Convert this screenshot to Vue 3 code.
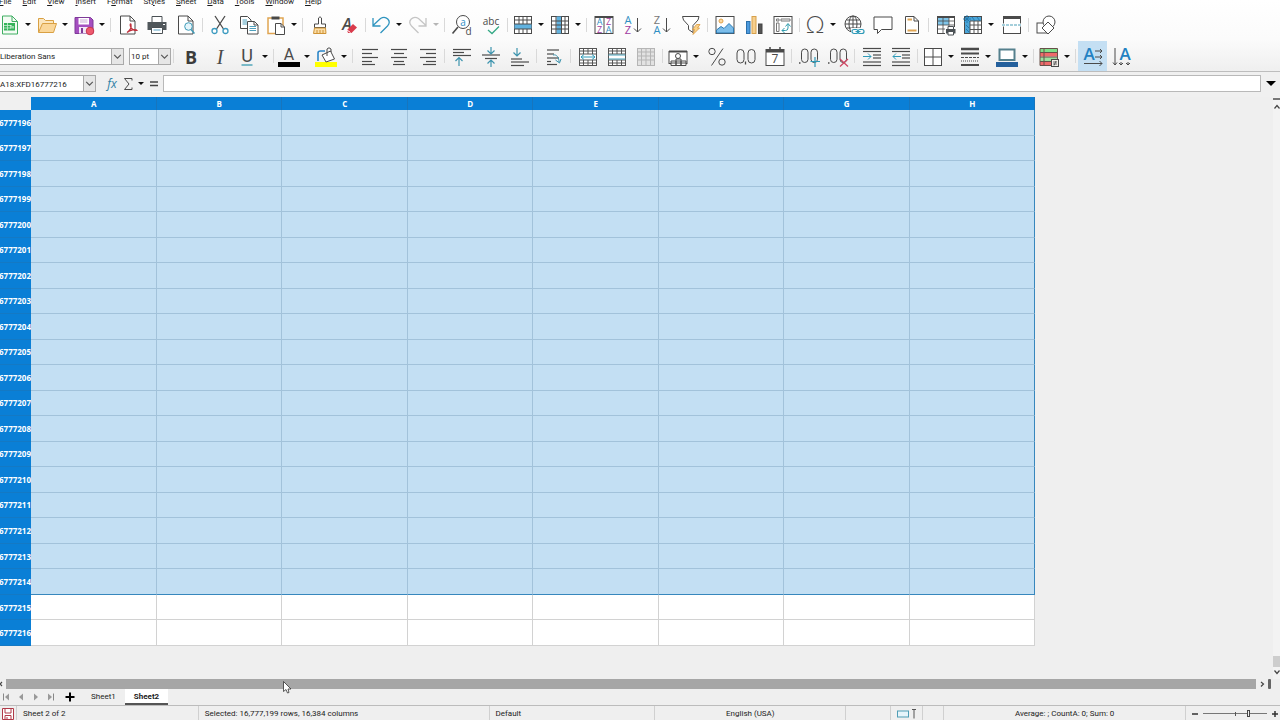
<script setup>
import { ref } from 'vue'

const menus = ['File', 'Edit', 'View', 'Insert', 'Format', 'Styles', 'Sheet', 'Data', 'Tools', 'Window', 'Help']
const columns = ['A', 'B', 'C', 'D', 'E', 'F', 'G', 'H']
const rows = Array.from({ length: 21 }, (_, i) => 16777196 + i)
const lastSelected = 16777214
const zoom = ref(72)

const D = '#4a4a4a'
const B = '#2f8fc4'
const lines = (list, color = D) =>
  list.map(([x1, x2, y]) => `<path d="M${x1} ${y}H${x2}" stroke="${color}" stroke-width="1.2"/>`).join('')
const frame = `<rect x="1.5" y="1.5" width="17" height="17" fill="#fff" stroke="${D}"/>`
const mergeGrid = (c) =>
  `<rect x="1.5" y="1.5" width="17" height="17" fill="#fff" stroke="${c}"/><path d="M5.5 1.5V7M10 1.5V7M14.5 1.5V7M5.5 13V18.5M10 13V18.5M14.5 13V18.5M1.5 4H18.5M1.5 7H18.5M1.5 13H18.5M1.5 16H18.5" stroke="${c}" fill="none"/>`
const txt = (x, y, size, fill, s, extra = '') =>
  `<text x="${x}" y="${y}" font-size="${size}" fill="${fill}" text-anchor="middle" ${extra}>${s}</text>`
const page = `<path d="M2.500 1H12L17 6V19H2.500Z" fill="#fff" stroke="${D}"/><path d="M12 1V6H17" fill="none" stroke="${D}"/>`

const art = {
  new: '<path d="M2.500 1H12L17.500 6.500V19H2.500Z" fill="#f4fbf4" stroke="#3fae62"/><path d="M12 1V6.500H17.500" fill="none" stroke="#3fae62"/><path d="M4 8H15V15.500H4Z" fill="#35b35a"/><path d="M4 10.500H11M4 13H11M7.500 8V15.500" stroke="#c8efd2" stroke-width=".8"/><path d="M11 13.500V10M13 13.500V11" stroke="#fff"/>',
  open: '<path d="M1.500 17V3.500H6.500L8.500 5.500H16.500V8" fill="#fbe6be" stroke="#d9a043"/><path d="M1.500 17.500L5.500 8.500H19.500L16.500 17.500Z" fill="#fad79a" stroke="#d9a043"/>',
  save: '<path d="M1 2.500H16.500L19 5V18.500H1Z" fill="#a54fc0" stroke="#7e3a98"/><path d="M4.500 3H15V9.500H4.500Z" fill="#fff"/><path d="M6 5H13.500M6 7H13.500" stroke="#c9a9d4"/><path d="M5 12H14V18.500H5Z" fill="#f3e8f7"/><path d="M7 13H9V18H7Z" fill="#7e3a98"/><circle cx="16" cy="16" r="3.800" fill="#ee5a6e" stroke="#c8374e"/>',
  pdf: page + '<path d="M9 17.500C12 15.500 13.500 12 13 9.500C12.500 8 11.700 9.500 12.500 11.500C13.500 14.500 16 15.500 19 15.500C18 13.500 12 15 9 17.500" fill="#fff" stroke="#c0303c" stroke-width="1.200"/>',
  print: '<path d="M5 7V1.500H15V7" fill="#fff" stroke="#4a5054"/><path d="M.5 7H19.500V15H.5Z" fill="#50575b"/><path d="M4.500 12.500H15.500V18.500H4.500Z" fill="#fff" stroke="#4a5054"/><path d="M6.500 15H13.500" stroke="#5aa5c8"/><path d="M16 9.500H18" stroke="#fff"/>',
  preview: page + '<circle cx="12.500" cy="11.500" r="3.800" fill="#e5f5fb" stroke="#3d9bb8"/><path d="M15 14.500L18.500 18.500" stroke="#3d9bb8" stroke-width="1.300"/>',
  cut: `<path d="M5 1L13.500 14M15 1L6.500 14" stroke="${D}" stroke-width="1.300"/><circle cx="4.500" cy="16" r="2.500" fill="#fff" stroke="#3d9bc0" stroke-width="1.300"/><circle cx="15.500" cy="16" r="2.500" fill="#fff" stroke="#3d9bc0" stroke-width="1.300"/>`,
  copy: `<path d="M1.500 1.500H8.500L12 5V13.500H1.500Z" fill="#fff" stroke="${D}"/><path d="M3.500 5H8M3.500 7H8M3.500 9H8" stroke="#4fa0bd"/><path d="M8.500 6.500H15.500L19 10V19H8.500Z" fill="#fff" stroke="${D}"/><path d="M15 6.500V10H19" fill="none" stroke="${D}"/><path d="M10.500 11.500H17M10.500 13.500H17M10.500 15.500H17" stroke="#4fa0bd"/>`,
  paste: `<path d="M2 3H17V18.500H2Z" fill="#fff" stroke="#e0a552" stroke-width="1.500"/><path d="M5.500 1.500H13.500V4.500H5.500Z" fill="#484848"/><path d="M9.500 8.500H15L18.500 12V19.500H9.500Z" fill="#fff" stroke="${D}"/><path d="M15 8.500V12H18.500" fill="none" stroke="${D}"/>`,
  brush: `<path d="M8.500 9V3Q10 .5 11.500 3V9H15.500V12.500H4.500V9Z" fill="#fff" stroke="${D}"/><path d="M4.500 13H15.500L16 18.500H3.500Z" fill="#fbdda6" stroke="#cf9436"/><path d="M7 15V18M10 15V18M13 15V18" stroke="#cf9436"/>`,
  clear: `${txt(8, 15, 16, D, 'A', 'font-style="italic" font-weight="600"')}<path d="M8 15L14 9L18 12.500L12.500 18H9Z" fill="#d93b4c"/><path d="M8 15L11.500 17.500" stroke="#fff"/>`,
  undo: '<path d="M2 3V11H9.500M2 10.500L9.500 3.500C15 0 21 6 16.500 11L9.500 18" fill="none" stroke="#2f94bf" stroke-width="1.300"/>',
  redo: '<path d="M18 3V11H10.500M18 10.500L10.500 3.500C5 0 -1 6 3.500 11L10.500 18" fill="none" stroke="#c5c5c5" stroke-width="1.300"/>',
  find: `<circle cx="11" cy="7" r="6.500" fill="#fff" stroke="${D}"/><path d="M6 12L.5 18.500" stroke="${D}" stroke-width="1.600"/>${txt(11, 10.500, 10, B, 'a')}${txt(16.500, 19.500, 10, D, 'd')}`,
  spell: `${txt(10, 10, 10, D, 'abc')}<path d="M7 15L11 18.500L18 11.500" fill="none" stroke="#35a986" stroke-width="1.300"/>`,
  row: frame + `<path d="M1.500 9H18.500V14H1.500Z" fill="#62b3e0"/><path d="M1.500 5H18.500M1.500 9H18.500M1.500 14H18.500M6 1.500V9M10 1.500V9M14 1.500V9M6 14V18.500M10 14V18.500M14 14V18.500" stroke="${D}"/>`,
  col: frame + `<path d="M6.500 1.500H11.500V18.500H6.500Z" fill="#62b3e0"/><path d="M1.500 6H18.500M1.500 10H18.500M1.500 14H18.500M6 1.500V18.500M11.500 1.500V18.500M15 1.500V18.500" stroke="${D}"/>`,
  sort: `<rect x="1" y="1.500" width="18" height="17" fill="#fff" stroke="${D}"/><path d="M1 2H19" stroke="${D}" stroke-width="2"/><path d="M10 2V18.500" stroke="${D}"/>${txt(5.500, 10, 9, B, 'A')}${txt(5.500, 17.500, 9, '#a03aa0', 'Z')}${txt(14.500, 10, 9, '#a03aa0', 'Z')}${txt(14.500, 17.500, 9, B, 'A')}`,
  asc: `${txt(5, 9, 11, B, 'A')}${txt(5, 18.500, 11, '#a03aa0', 'Z')}<path d="M14.500 3V17M11 13.500L14.500 17L18 13.500" fill="none" stroke="${D}"/>`,
  desc: `${txt(5, 9, 11, '#777', 'Z')}${txt(5, 18.500, 11, B, 'A')}<path d="M14.500 3V17M11 13.500L14.500 17L18 13.500" fill="none" stroke="${D}"/>`,
  filter: `<path d="M1.500 1.500H18L17 5L12 10.500V17.500L7.500 14.500V10.500L2.500 5Z" fill="#fff" stroke="${D}"/><path d="M15.500 9.500H19L16.500 13H18.500L12 19.500L13.500 14.500H11.500Z" fill="#fbd38a" stroke="#d9973a" stroke-width=".8"/>`,
  image: `<rect x="1" y="1.500" width="18" height="17" fill="#fff" stroke="${D}"/><circle cx="6" cy="6" r="2" fill="#fbd9a2" stroke="#dfa14a"/><path d="M1.500 15L6 11.500L9 13.500L14 8.500L18.500 13V18H1.500Z" fill="#7bbdea" stroke="#2d7bb5"/>`,
  chart: '<rect x="2.500" y="6.500" width="3.500" height="12" fill="#4c9ade" stroke="#2b70ab"/><rect x="8" y="1.500" width="4" height="17" fill="#f6cf8e" stroke="#d7a14c"/><rect x="14.500" y="9" width="3.500" height="9.500" fill="#555" stroke="#444"/>',
  pivot: `<rect x="1" y="1.500" width="18" height="17" fill="#fff" stroke="${D}"/><path d="M3.500 4H6V6H3.500ZM8 4H17V6H8ZM3.500 8H6V16.500H3.500Z" fill="#fff" stroke="#777"/><path d="M9 15.500H12.500Q15 15.500 15 13V9M12.500 11.500L15 8.500L17.500 11.500M11.500 13L9 15.500L11.500 18" fill="none" stroke="#2f9cad"/>`,
  omega: txt(10, 18, 24, D, 'Ω', 'class="light"'),
  link: `<circle cx="9" cy="9" r="8" fill="#fff" stroke="${D}"/><path d="M1 9H17M9 1V17M2.500 5H15.500M2.500 13H15.500" stroke="${D}"/><ellipse cx="9" cy="9" rx="4" ry="8" fill="none" stroke="${D}"/><path d="M7 13H21V20H7Z" fill="#fafafa"/><rect x="8" y="14.500" width="6" height="4" rx="2" fill="none" stroke="#2e9ab8" stroke-width="1.200"/><rect x="14" y="14.500" width="6" height="4" rx="2" fill="none" stroke="#2e9ab8" stroke-width="1.200"/><path d="M11.500 16.500H16.500" stroke="#2e9ab8"/>`,
  comment: `<path d="M1 2H19V14.500H8.500L4.500 18.500V14.500H1Z" fill="#fff" stroke="${D}"/>`,
  header: `<path d="M3.500 1.500H12L16.500 6V18.500H3.500Z" fill="#fff" stroke="${D}"/><path d="M12 1.500V6H16.500" fill="none" stroke="${D}"/><path d="M5.500 4.500H10M5.500 15.500H14.500" stroke="#e0a552" stroke-width="2"/>`,
  area: frame + `<path d="M2 2H13V10H2Z" fill="#7fc4e8"/><path d="M1.500 2H18.500" stroke="${D}" stroke-width="2"/><path d="M1.500 6H18.500M1.500 10H18.500M1.500 14H18.500M7 1.500V18.500M13 1.500V18.500" stroke="${D}" stroke-width=".8"/><path d="M9 12H20V20H9Z" fill="#fafafa"/><path d="M10 14H19.500V18.500H10Z" fill="#4a5054"/><path d="M12 14V11.500H17.500V14M12 16.500H17.500V20H12Z" fill="#fff" stroke="#4a5054"/>`,
  freeze: frame + '<path d="M2 2H18V6H7V18H2Z" fill="#4ba5d8"/><path d="M7 6H18.500M7 10H18.500M7 14.500H18.500M7 6V18.500M11 6V18.500M15 6V18.500" stroke="#555"/><path d="M0 4H8M4 0V8M1 1L7 7M7 1L1 7M9 2L12 6M14 2L17 6M3 10L6 13M3 14L6 17" stroke="#1f76ab" stroke-width=".9"/>',
  split: `<rect x="1.500" y="1.500" width="17" height="17" fill="#fff" stroke="${D}"/><path d="M1 2.500H19" stroke="${D}" stroke-width="3"/><path d="M0 10H20" stroke="#fff" stroke-width="3"/><path d="M0 10H20" stroke="#4a9fb8" stroke-dasharray="3 1"/>`,
  shapes: `<rect x="1" y="8" width="10" height="10" fill="#fff" stroke="${D}"/><circle cx="13" cy="7" r="6" fill="#fff" stroke="${D}"/><path d="M12 7L18 13L12 19L6 13Z" fill="#fff" stroke="${D}"/>`,

  bold: txt(10, 16.500, 18, '#3c3c3c', 'B', 'font-weight="700"'),
  italic: txt(10, 16.500, 20, D, 'I', 'class="serif" font-style="italic"'),
  underline: `${txt(10, 15, 18, D, 'U', 'class="ui"')}<path d="M4.500 18H15.500" stroke="#3a9bb0" stroke-width="1.300"/>`,
  fontcolor: `${txt(10, 12.500, 16, D, 'A', 'class="ui"')}<path d="M-1 15H21V20H-1Z" fill="#000"/>`,
  highlight: `<path d="M-1 15H21V20H-1Z" fill="#ffff00"/><path d="M2 14V6Q2 4 4.500 4H9" fill="none" stroke="#2c86c8" stroke-width="1.600"/><path d="M6 8L14.500 4L18.500 12L10 15Z" fill="#fff" stroke="${D}"/><path d="M11 9V2Q13 -.5 15 2V5" fill="none" stroke="${D}"/>`,
  left: lines([[2, 18, 2.500], [2, 12, 6.500], [2, 18, 10.500], [2, 12, 14.500], [2, 15, 17.500]]),
  center: lines([[2, 18, 2.500], [5, 15, 6.500], [2, 18, 10.500], [5, 15, 14.500], [4, 16, 17.500]]),
  right: lines([[2, 18, 2.500], [8, 18, 6.500], [2, 18, 10.500], [8, 18, 14.500], [5, 18, 17.500]]),
  top: lines([[1, 19, 2.500], [1, 12, 5.500], [1, 19, 8.500]]) + `<path d="M7 19V11M3.500 14L7 10.500L10.500 14" fill="none" stroke="#3d94ae" stroke-width="1.200"/>`,
  middle: lines([[1, 19, 8], [4, 16, 11.500]]) + '<path d="M10 0V7M6.500 3.500L10 7L13.500 3.500M10 20V13M6.500 16.500L10 13L13.500 16.500" fill="none" stroke="#3d94ae" stroke-width="1.200"/>',
  bottom: lines([[1, 12, 12], [1, 19, 15], [1, 14, 18.500]]) + '<path d="M7 1V9M3.500 5.500L7 9L10.500 5.500" fill="none" stroke="#3d94ae" stroke-width="1.200"/>',
  wrap: lines([[3, 15, 3], [3, 10, 7], [3, 15, 11], [3, 7, 14.500], [3, 13, 17.500]]) + '<path d="M9 8C13 7 15 11 15 15M11.500 13L15.500 16L17 12" fill="none" stroke="#3d94ae"/>',
  mergeC: mergeGrid('#555') + '<path d="M3 10H17M6 7.500L3 10L6 12.500M14 7.500L17 10L14 12.500" fill="none" stroke="#2e9ab8"/>',
  merge: mergeGrid('#555') + '<path d="M1.500 8H18.500M1.500 12H18.500" stroke="#4ba5bd"/>',
  unmerge: '<rect x="1.500" y="1.500" width="17" height="17" fill="#e2e2e2" stroke="#b5b5b5"/><path d="M5.500 1.500V18.500M10 1.500V18.500M14.500 1.500V18.500M1.500 5H18.500M1.500 9H18.500M1.500 13H18.500" stroke="#b5b5b5"/>',
  currency: `<rect x="1" y="4.500" width="18" height="12" fill="#fff" stroke="${D}"/><path d="M1 4.500H19" stroke="${D}" stroke-width="2"/><circle cx="10" cy="9" r="2.500" fill="#fff" stroke="${D}"/><path d="M3 14V18.500H8V14M8 12V18.500H13V12M13 14V18.500H18V14" fill="#fff" stroke="${D}"/><path d="M3 14H8M3 16H8M8 12H13M8 14H13M8 16H13M13 14H18M13 16H18" stroke="${D}"/>`,
  percent: `<path d="M16 1.500L4.500 18.500" stroke="${D}"/><circle cx="5" cy="4.500" r="3.200" fill="none" stroke="${D}"/><circle cx="15" cy="15" r="3.200" fill="none" stroke="${D}"/>`,
  number: `<rect x="1" y="2.500" width="7" height="13.500" rx="3.500" fill="none" stroke="${D}"/><rect x="12" y="2.500" width="7" height="13.500" rx="3.500" fill="none" stroke="${D}"/><path d="M9.500 14.500V17.500" stroke="${D}" stroke-width="1.300"/>`,
  date: `<rect x="1" y="2.500" width="18" height="16" fill="#fff" stroke="${D}"/><path d="M1 4H19" stroke="${D}" stroke-width="3"/><path d="M5 0V5M15 0V5" stroke="${D}" stroke-width="1.500"/>${txt(10, 16, 12, D, '7')}`,
  addDec: `<rect x="2.500" y="2" width="6.500" height="13.500" rx="3.200" fill="none" stroke="${D}"/><rect x="12" y="2" width="6.500" height="13.500" rx="3.200" fill="none" stroke="${D}"/><path d="M0 16H1.500" stroke="${D}" stroke-width="1.500"/><path d="M16 10V20M11.500 14.500H21" stroke="#2e9ab8" stroke-width="1.200"/>`,
  delDec: `<rect x="2.500" y="2" width="6.500" height="13.500" rx="3.200" fill="none" stroke="${D}"/><rect x="12" y="2" width="6.500" height="13.500" rx="3.200" fill="none" stroke="${D}"/><path d="M0 16H1.500" stroke="${D}" stroke-width="1.500"/><path d="M12 12L20 19.500M20 12L12 19.500" stroke="#cf4562" stroke-width="1.200"/>`,
  indent: lines([[1, 19, 1.500], [1, 19, 4.500], [11, 19, 8], [11, 19, 11], [1, 19, 15], [1, 19, 18.500]]) + '<path d="M1 9.500H9M6 6.500L9 9.500L6 12.500" fill="none" stroke="#2e9ab8"/>',
  outdent: lines([[1, 19, 1.500], [1, 19, 4.500], [11, 19, 8], [11, 19, 11], [1, 19, 15], [1, 19, 18.500]]) + '<path d="M2 9.500H10M5 6.500L2 9.500L5 12.500" fill="none" stroke="#2e9ab8"/>',
  borders: `<rect x="1.500" y="1.500" width="17" height="17" fill="#fff" stroke="${D}"/><path d="M10 1.500V18.500M1.500 10H18.500" stroke="${D}"/>`,
  style: `<path d="M1 2H19" stroke="${D}" stroke-width="2.500"/><path d="M1 6.500H19" stroke="${D}" stroke-width="2"/><path d="M1 10.500H19" stroke="${D}" stroke-width="1.200" stroke-dasharray="3 1"/><path d="M1 14H19" stroke="${D}" stroke-dasharray="1 1"/><path d="M1 18H19" stroke="${D}" stroke-width="2"/>`,
  bcolor: '<path d="M-1 15H21V20H-1Z" fill="#24609c"/><rect x="2.500" y="2.500" width="15" height="10.500" fill="#fff" stroke="#55808d" stroke-width="2"/>',
  cond: `<path d="M1 1.500H18.500V5H1Z" fill="#7fe08a"/><path d="M1 6H18.500V9.500H1ZM1 14.500H18.500V18H1Z" fill="#ee6a6a"/><path d="M1 10H18.500V14H1Z" fill="#9be2a0"/><path d="M1 1.500H18.500V18.500H1ZM1 5.500H18.500M1 10H18.500M1 14.500H18.500M5 1.500V18.500" fill="none" stroke="#685048"/><rect x="12.500" y="12.500" width="7" height="7" fill="#f2efe9" stroke="${D}"/><path d="M14 15H18M14 17H18M17 14L15 18.500" stroke="${D}" stroke-width=".8"/>`,
  ltr: `${txt(6, 13, 17, '#2381c2', 'A', 'font-weight="600"')}<path d="M12 4H19M17 2L19 4L17 6M12 10H19M17 8L19 10L17 12M1 16.500H19M16.500 14L19 16.500L16.500 19" fill="none" stroke="${D}"/>`,
  ttb: `${txt(13, 13, 17, '#2381c2', 'A', 'font-weight="600"')}<path d="M3 1V18M1 15.500L3 18L5 15.500M9 15V18M7 16L9 18L11 16M16 15V18M14 16L16 18L18 16" fill="none" stroke="${D}"/>`
}

// i: icon key, t: label, d: has a drop-down arrow
const standard = [
  [{ i: 'new', t: 'New', d: 1 }, { i: 'open', t: 'Open', d: 1 }, { i: 'save', t: 'Save', d: 1 }],
  [{ i: 'pdf', t: 'Export as PDF' }, { i: 'print', t: 'Print' }, { i: 'preview', t: 'Print Preview' }],
  [{ i: 'cut', t: 'Cut' }, { i: 'copy', t: 'Copy' }, { i: 'paste', t: 'Paste', d: 1 }],
  [{ i: 'brush', t: 'Clone Formatting' }, { i: 'clear', t: 'Clear Formatting' }],
  [{ i: 'undo', t: 'Undo', d: 1 }, { i: 'redo', t: 'Redo', d: 1, off: 1 }],
  [{ i: 'find', t: 'Find and Replace' }, { i: 'spell', t: 'Spelling' }],
  [{ i: 'row', t: 'Row', d: 1 }, { i: 'col', t: 'Column', d: 1 }],
  [{ i: 'sort', t: 'Sort' }, { i: 'asc', t: 'Sort Ascending' }, { i: 'desc', t: 'Sort Descending' }, { i: 'filter', t: 'AutoFilter' }],
  [{ i: 'image', t: 'Insert Image' }, { i: 'chart', t: 'Insert Chart' }, { i: 'pivot', t: 'Pivot Table' }],
  [{ i: 'omega', t: 'Special Character', d: 1 }, { i: 'link', t: 'Hyperlink' }, { i: 'comment', t: 'Comment' }, { i: 'header', t: 'Headers and Footers' }],
  [{ i: 'area', t: 'Print Area' }, { i: 'freeze', t: 'Freeze Rows and Columns', d: 1 }, { i: 'split', t: 'Split Window' }],
  [{ i: 'shapes', t: 'Draw Functions' }]
]
const formatting = [
  [{ i: 'bold', t: 'Bold' }, { i: 'italic', t: 'Italic' }, { i: 'underline', t: 'Underline', d: 1 }],
  [{ i: 'fontcolor', t: 'Font Color', d: 1 }, { i: 'highlight', t: 'Background Color', d: 1 }],
  [{ i: 'left', t: 'Align Left' }, { i: 'center', t: 'Align Center' }, { i: 'right', t: 'Align Right' }],
  [{ i: 'top', t: 'Align Top' }, { i: 'middle', t: 'Center Vertically' }, { i: 'bottom', t: 'Align Bottom' }],
  [{ i: 'wrap', t: 'Wrap Text' }],
  [{ i: 'mergeC', t: 'Merge and Center' }, { i: 'merge', t: 'Merge Cells' }, { i: 'unmerge', t: 'Unmerge Cells', off: 1 }],
  [{ i: 'currency', t: 'Currency', d: 1 }, { i: 'percent', t: 'Percent' }, { i: 'number', t: 'Number' }, { i: 'date', t: 'Date' }],
  [{ i: 'addDec', t: 'Add Decimal Place' }, { i: 'delDec', t: 'Delete Decimal Place' }],
  [{ i: 'indent', t: 'Increase Indent' }, { i: 'outdent', t: 'Decrease Indent' }],
  [{ i: 'borders', t: 'Borders', d: 1 }, { i: 'style', t: 'Border Style', d: 1 }, { i: 'bcolor', t: 'Border Color', d: 1 }],
  [{ i: 'cond', t: 'Conditional Formatting', d: 1 }],
  [{ i: 'ltr', t: 'Text Left to Right', on: 1 }, { i: 'ttb', t: 'Text Top to Bottom' }]
]
</script>

<template>
  <div class="app">
    <header class="chrome">
      <nav class="menubar">
        <button v-for="m in menus" :key="m" class="menu"><template v-if="m === 'Format'">F<u>o</u>rmat</template><template v-else-if="m === 'Styles'">St<u>y</u>les</template><template v-else><u>{{ m[0] }}</u>{{ m.slice(1) }}</template></button>
      </nav>
      <div class="toolbar standard">
        <div v-for="(g, n) in standard" :key="n" class="group">
          <template v-for="b in g" :key="b.i">
            <button class="tool" :class="{ split: b.d }" :aria-label="b.t">
              <svg class="icon" viewBox="0 0 20 20" v-html="art[b.i]"></svg>
            </button>
            <button v-if="b.d" class="drop" :class="{ off: b.off }" :aria-label="b.t + ' options'"></button>
          </template>
        </div>
      </div>
      <div class="toolbar format">
        <div class="combos">
          <div class="combo font">
            <select aria-label="Font Name"><option>Liberation Sans</option></select>
            <svg class="chev" viewBox="0 0 10 10"><path d="M2 3.500L5 6.500L8 3.500" /></svg>
          </div>
          <div class="combo size">
            <select aria-label="Font Size"><option>10 pt</option></select>
            <svg class="chev" viewBox="0 0 10 10"><path d="M2 3.500L5 6.500L8 3.500" /></svg>
          </div>
        </div>
        <div v-for="(g, n) in formatting" :key="n" class="group">
          <template v-for="b in g" :key="b.i">
            <button class="tool" :class="{ split: b.d, on: b.on }" :aria-label="b.t">
              <svg class="icon" viewBox="0 0 20 20" v-html="art[b.i]"></svg>
            </button>
            <button v-if="b.d" class="drop" :aria-label="b.t + ' options'"></button>
          </template>
        </div>
      </div>
    </header>

    <div class="formulabar">
      <div class="combo name">
        <input type="text" aria-label="Name Box" value="A18:XFD16777216" />
        <svg class="chev" viewBox="0 0 10 10"><path d="M2 3.500L5 6.500L8 3.500" /></svg>
      </div>
      <button class="fbtn fx" aria-label="Function Wizard"><i>fx</i></button>
      <button class="fbtn sum" aria-label="Select Function">
        <svg viewBox="0 0 10 14"><path d="M9 3.500V1.500H1.500L6 7L1.500 12.500H9V10.500" fill="none" stroke="#4a4a4a" /></svg>
      </button>
      <button class="drop" aria-label="Function list"></button>
      <button class="fbtn eq" aria-label="Formula">
        <svg viewBox="0 0 10 10"><path d="M1 3H9M1 6.500H9" stroke="#444" stroke-width="1.500" /></svg>
      </button>
      <input class="formula" type="text" aria-label="Input line" />
      <button class="expand" aria-label="Expand Formula Bar"></button>
    </div>

    <main class="work">
      <div class="sheet">
        <table>
          <colgroup><col class="hcol" /><col v-for="c in columns" :key="c" /></colgroup>
          <thead>
            <tr><td class="corner"></td><th v-for="c in columns" :key="c" scope="col">{{ c }}</th></tr>
          </thead>
          <tbody>
            <tr v-for="r in rows" :key="r" :class="{ sel: r <= lastSelected, last: r === lastSelected }">
              <th scope="row"><span>{{ r }}</span></th>
              <td v-for="c in columns" :key="c"></td>
            </tr>
          </tbody>
        </table>
      </div>
      <div class="vscroll">
        <span class="splitter"></span>
        <svg class="arr" viewBox="0 0 6 6"><path d="M1 4.500L3.500 1.500L6 4.500" /></svg>
        <span class="track"></span>
        <span class="vthumb"></span>
        <svg class="arr" viewBox="0 0 6 6"><path d="M1 1.500L3.500 4.500L6 1.500" /></svg>
      </div>
    </main>

    <div class="hscroll">
      <svg class="harr" viewBox="0 0 6 10"><path d="M2 3L0 5L2 7" /></svg>
      <span class="hthumb"></span>
      <svg class="harr wide" viewBox="0 0 12 10"><path d="M5 3L7.500 5L5 7.500" /></svg>
      <span class="hsplit"></span>
      <svg class="cursor" viewBox="0 0 9 13"><path d="M.5 .5V10.500L3 8.500L4.500 12L6 11.500L5 8H8Z" fill="#fff" stroke="#333" stroke-width=".8" /></svg>
    </div>

    <nav class="tabs">
      <button class="nav" aria-label="First sheet"><svg viewBox="0 0 10 10"><path d="M2.500 1.500V8.500" stroke="#888" /><path d="M8 1.500V8.500L4 5Z" /></svg></button>
      <button class="nav" aria-label="Previous sheet"><svg viewBox="0 0 10 10"><path d="M7 1.500V8.500L3 5Z" /></svg></button>
      <button class="nav" aria-label="Next sheet"><svg viewBox="0 0 10 10"><path d="M3 1.500V8.500L7 5Z" /></svg></button>
      <button class="nav" aria-label="Last sheet"><svg viewBox="0 0 10 10"><path d="M7.500 1.500V8.500" stroke="#888" /><path d="M2 1.500V8.500L6 5Z" /></svg></button>
      <button class="nav add" aria-label="Add sheet"><svg viewBox="0 0 10 10"><path d="M5 .5V9.500M.5 5H9.500" stroke="#000" stroke-width="2" /></svg></button>
      <button class="tab">Sheet1</button>
      <button class="tab active">Sheet2</button>
    </nav>

    <footer class="status">
      <span class="cell mid">
        <svg class="disk" viewBox="0 0 12 12"><path d="M.5 .5H11.500V11.500H.5Z" fill="#fff" stroke="#b03a48" /><path d="M3 .5V5H9V.5M3 11.500V7.500H9V11.500M5 9V11" fill="none" stroke="#b03a48" /></svg>
      </span>
      <span class="cell">Sheet 2 of 2</span>
      <span class="cell">Selected: 16,777,199 rows, 16,384 columns</span>
      <span class="cell">Default</span>
      <span class="cell mid">English (USA)</span>
      <span class="cell"></span>
      <span class="cell mid">
        <svg class="mode" viewBox="0 0 20 10"><rect x=".5" y="2" width="11" height="6" fill="#e6f4fa" stroke="#4f9db5" /><path d="M15 .5H19M17 .5V9.500" stroke="#555" /></svg>
      </span>
      <span class="cell"></span>
      <span class="cell mid">Average: ; CountA: 0; Sum: 0</span>
      <span class="cell zoom">
        <button aria-label="Zoom out"><svg viewBox="0 0 8 8"><path d="M1 4H7" stroke="#333" stroke-width="1.500" /></svg></button>
        <span class="slide"><input v-model="zoom" type="range" min="0" max="100" aria-label="Zoom" /></span>
        <button aria-label="Zoom in"><svg viewBox="0 0 8 8"><path d="M1 4H7M4 1V7" stroke="#333" stroke-width="1.500" /></svg></button>
      </span>
    </footer>
  </div>
</template>

<style>
html, body { margin: 0; overflow: hidden; background: #efefef; }
</style>

<style scoped>
.app {
  display: flex;
  flex-direction: column;
  height: 100vh;
  overflow: hidden;
  background: #efefef;
  color: #1c1c1c;
  font-family: Roboto, "Open Sans", sans-serif;
  font-size: 8px;
  line-height: 12px;
}
button, input, select { font: inherit; color: inherit; margin: 0; padding: 0; border: 0; background: none; border-radius: 0; box-sizing: border-box; outline: 0; }
svg { display: block; flex: none; }

.chrome { flex: none; background: linear-gradient(#fff, #fbfbfb 55%, #efefef); border-bottom: 1px solid #bdbdbd; }
.menubar { display: flex; align-items: flex-end; gap: 11px; height: 8px; overflow: hidden; }
.menu { flex: none; height: 12px; line-height: 12px; }
.menu:first-child { margin-left: -1px; }
.menu u { text-underline-offset: 1px; }

.toolbar { display: flex; align-items: stretch; }
.standard { height: 33px; margin-left: -3px; }
.format { height: 30px; margin-left: -2px; }
.format .icon { margin-top: 1px; }
.group { display: flex; align-items: stretch; flex: none; }
.group + .group, .combos + .group { position: relative; margin-left: 5px; }
.group + .group::before, .combos + .group::before {
  content: ""; position: absolute; left: -3px; top: 50%; width: 1px; height: 14px; margin-top: -7px; background: #d9d9d9;
}
.tool { display: flex; align-items: center; justify-content: center; width: 29px; flex: none; }
.tool.split { width: 25px; }
.tool.on { background: #c4dff3; }
.icon { width: 20px; height: 20px; overflow: visible; fill: none; }
.icon :deep(text) { font-family: "Open Sans", "Noto Sans", sans-serif; }
.icon :deep(.light) { font-family: Lato, "Open Sans", sans-serif; font-weight: 300; }
.icon :deep(.ui) { font-family: Roboto, "Open Sans", sans-serif; }
.icon :deep(.serif) { font-family: "Liberation Serif", serif; }
.drop { display: flex; align-items: center; justify-content: center; width: 12px; flex: none; }
.drop::before { content: ""; border: 3px solid transparent; border-top-color: #111; border-bottom: 0; }
.drop.off::before { border-top-color: #b5b5b5; }

.combos { display: flex; align-items: center; gap: 5px; width: 173px; flex: none; }
.combo { position: relative; flex: none; height: 17px; box-sizing: border-box; border: 1px solid #a9a9a9; background: #fff; }
.combo select, .combo input { appearance: none; display: block; width: 100%; height: 100%; padding: 1px 12px 0 1px; }
.chev { position: absolute; right: 0; top: 0; width: 11px; height: 100%; background: #e6e6e6; border-left: 1px solid #a9a9a9; pointer-events: none; }
.chev path { fill: none; stroke: #555; }
.font { width: 126px; }
.size { width: 42px; }

.formulabar { display: flex; align-items: center; height: 25px; padding-bottom: 2px; box-sizing: border-box; flex: none; background: #f0f0f0; }
.name { width: 98px; margin-left: -2px; }
.fbtn { display: flex; align-items: center; justify-content: center; flex: none; height: 18px; }
.fx { width: 16px; margin-left: 8px; color: #2d7fa5; font-size: 12px; font-family: "Open Sans", sans-serif; }
.sum { width: 16px; }
.sum svg { width: 10px; height: 14px; }
.formulabar .drop { height: 18px; width: 9px; }
.eq { width: 18px; }
.eq svg { width: 10px; height: 10px; }
.formula { flex: 1; min-width: 0; height: 17px; border: 1px solid #b9b9b9; background: #fff; padding: 0 4px; }
.expand { width: 19px; display: flex; align-items: center; justify-content: center; height: 18px; }
.expand::before { content: ""; border: 5px solid transparent; border-top-color: #000; border-bottom: 0; }

.work { display: flex; flex: 1; min-height: 0; }
.sheet { flex: 1; min-width: 0; overflow: hidden; }
table { width: 1035px; height: 549px; table-layout: fixed; border-collapse: separate; border-spacing: 0; font-family: "Open Sans", "Noto Sans", sans-serif; }
.hcol { width: 31px; }
td, th { padding: 0; box-sizing: border-box; }
thead th, thead td { height: 13px; }
thead th { background: #0a7fd6; color: #fff; border-right: 1px solid #1775bd; font-weight: 700; line-height: 12px; padding-left: 1px; }
.corner { background: #f0f0f0; }
tbody th { background: #0a7fd6; color: #fff; border-bottom: 1px solid #1479c4; font-weight: 700; line-height: 10px; padding-top: 1px; overflow: hidden; }
tbody th span { display: flex; justify-content: flex-end; }
tbody td { background: #fff; border-right: 1px solid #d2d2d2; border-bottom: 1px solid #d2d2d2; }
.sel td { background: #c3dff3; border-color: #a2c2da; }
.sel td:last-child { border-right: 1px solid #3787bd; }
.last td { border-bottom: 1px solid #3787bd; }

.vscroll { display: flex; flex-direction: column; width: 7px; flex: none; background: #f3f3f3; }
.splitter { height: 2px; margin: 1px 0 4px; background: #777; }
.arr { width: 7px; height: 6px; }
.arr path, .harr path { fill: none; stroke: #444; stroke-width: 1.2; }
.track { flex: 1; }
.vthumb { height: 11px; margin-bottom: 2px; background: #cdcdcd; }
.vscroll .arr:last-child { margin-bottom: 4px; }

.hscroll { position: relative; display: flex; align-items: stretch; height: 10px; flex: none; }
.harr { width: 6px; height: 10px; }
.harr.wide { width: 12px; }
.hthumb { flex: 1; background: #a6a6a6; }
.hsplit { width: 3px; margin-right: 9px; background: #666; border-radius: 1px; }
.cursor { position: absolute; left: 283px; top: 2px; width: 9px; height: 13px; }

.tabs { display: flex; height: 16px; flex: none; border-bottom: 1px solid #bcbcbc; }
.nav { display: flex; align-items: center; justify-content: center; width: 15px; }
.nav:first-child { margin-left: -2px; }
.nav svg { width: 10px; height: 10px; fill: #999; }
.nav.add { width: 24px; }
.tab { width: 43px; text-align: center; line-height: 12px; padding-top: 2px; border-bottom: 2px solid transparent; }
.tab.active { background: #fff; border-bottom-color: #555; font-weight: 700; }

.status { display: grid; grid-template-columns: 17px 182fr 291fr 166fr 191fr 45px 32px 21px 242fr 94px; height: 14px; flex: none; }
.cell { display: flex; align-items: center; min-width: 0; padding-left: 6px; padding-top: 1px; border-right: 1px solid #d0d0d0; line-height: 14px; white-space: nowrap; overflow: hidden; }
.cell.mid { justify-content: center; padding-left: 0; }
.cell:last-child { border-right: 0; }
.disk { width: 12px; height: 12px; }
.mode { width: 20px; height: 10px; }
.zoom { padding-left: 4px; }
.zoom button { flex: none; }
.zoom svg { width: 10px; height: 8px; }
.slide { position: relative; display: flex; align-items: center; flex: 1; min-width: 0; height: 14px; margin: 0 3px; }
.slide::before { content: ""; position: absolute; left: 50%; top: 5px; width: 1px; height: 4px; background: #555; }
.slide input { appearance: none; width: 100%; height: 14px; }
.slide input::-webkit-slider-runnable-track { height: 1px; background: #777; }
.slide input::-webkit-slider-thumb { appearance: none; width: 3px; height: 7px; margin-top: -3px; border: 1px solid #444; background: #eee; box-sizing: border-box; }
</style>
